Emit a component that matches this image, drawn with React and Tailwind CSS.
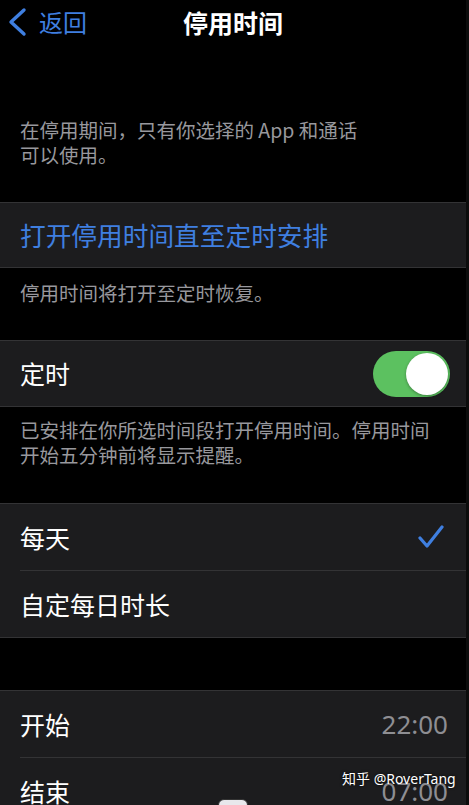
import React from "react";

const font = { fontFamily: '"Noto Sans CJK SC", "Noto Sans", sans-serif' };

function Toggle() {
  return (
    <div className="w-[77px] h-[46px] rounded-full bg-[#5cc160] flex items-center justify-end px-[2px]">
      <div className="w-[42px] h-[42px] rounded-full bg-white shadow-[0_1px_3px_rgba(0,0,0,0.35)]" />
    </div>
  );
}

function Check() {
  return (
    <svg width="26" height="26" viewBox="0 0 26 26" fill="none">
      <polyline
        points="2,14 9,22 24,3"
        stroke="#3f7fe0"
        strokeWidth="3.2"
        strokeLinecap="round"
        strokeLinejoin="round"
      />
    </svg>
  );
}

export default function App() {
  return (
    <div className="w-[469px] h-[805px] bg-black overflow-hidden relative flex items-start" style={font}>
      <div className="w-[466px] shrink-0">
        {/* Nav */}
        <div className="h-[44px] grid grid-cols-[1fr_auto_1fr] items-center">
          <div className="flex items-center">
            <svg width="34" height="44" viewBox="0 0 34 44" fill="none" className="shrink-0">
              <polyline
                points="24,10 11,22 24,34"
                stroke="#3f7fe0"
                strokeWidth="3.4"
                strokeLinecap="round"
                strokeLinejoin="round"
              />
            </svg>
            <span className="ml-[5px] text-[24px] leading-none text-[#3f7fe0]">返回</span>
          </div>
          <div className="text-[25px] leading-none font-semibold text-white">停用时间</div>
          <div />
        </div>

        {/* Description */}
        <div className="pt-[73px] pb-[35px] px-5 text-[19.5px] leading-[25px] text-[#98989d]">
          <p>在停用期间，只有你选择的 App 和通话</p>
          <p>可以使用。</p>
        </div>

        {/* Cell 1 */}
        <div className="h-[66px] bg-[#1c1c1e] border-y border-[#333335] flex items-center px-5">
          <span className="text-[25.7px] leading-none text-[#3f7fe0]">打开停用时间直至定时安排</span>
        </div>
        <div className="pt-[12px] pb-[35px] px-5 text-[19.5px] leading-[25px] text-[#98989d]">
          停用时间将打开至定时恢复。
        </div>

        {/* Cell 2 */}
        <div className="h-[67px] bg-[#1c1c1e] border-y border-[#333335] flex items-center justify-between pl-5 pr-[16px]">
          <span className="text-[25px] leading-none text-white">定时</span>
          <Toggle />
        </div>
        <div className="pt-[10px] pb-[36px] px-5 text-[19.5px] leading-[25px] text-[#98989d]">
          <p>已安排在你所选时间段打开停用时间。停用时间</p>
          <p>开始五分钟前将显示提醒。</p>
        </div>

        {/* Group 3 */}
        <div className="bg-[#1c1c1e] border-y border-[#333335]">
          <div className="h-[66px] flex items-center justify-between pl-5 pr-[22px]">
            <span className="text-[25px] leading-none text-white">每天</span>
            <Check />
          </div>
          <div className="ml-5 h-px bg-[#333335]" />
          <div className="h-[66px] flex items-center pl-5">
            <span className="text-[25px] leading-none text-white">自定每日时长</span>
          </div>
        </div>

        <div className="h-[52px]" />

        {/* Group 4 */}
        <div className="bg-[#1c1c1e] border-t border-[#333335] h-[200px]">
          <div className="h-[66px] flex items-center justify-between pl-5 pr-[18px]">
            <span className="text-[25px] leading-none text-white">开始</span>
            <span className="text-[26px] leading-none text-[#8e8e93]" style={{ fontFamily: '"Noto Sans", sans-serif' }}>22:00</span>
          </div>
          <div className="ml-5 h-px bg-[#333335]" />
          <div className="h-[66px] flex items-center justify-between pl-5 pr-[18px]">
            <span className="text-[25px] leading-none text-white">结束</span>
            <span className="text-[26px] leading-none text-[#8e8e93]" style={{ fontFamily: '"Noto Sans", sans-serif' }}>07:00</span>
          </div>
        </div>
      </div>
      <div className="w-[3px] h-full bg-[#0c0c0c]" />

      {/* Watermark */}
      <div
        className="absolute left-[342px] top-[772px] text-[14px] leading-none text-white [text-shadow:0_0_3px_rgba(0,0,0,0.8)] whitespace-nowrap"
        style={{ fontFamily: '"Noto Sans", "Noto Sans CJK SC", sans-serif' }}
      >
        知乎 @RoverTang
      </div>
      {/* Bottom badge */}
      <div className="absolute left-[218px] top-[799px] w-[30px] h-[14px] rounded-[6px] bg-[#e8e8ec] border border-[#333]" />
    </div>
  );
}
